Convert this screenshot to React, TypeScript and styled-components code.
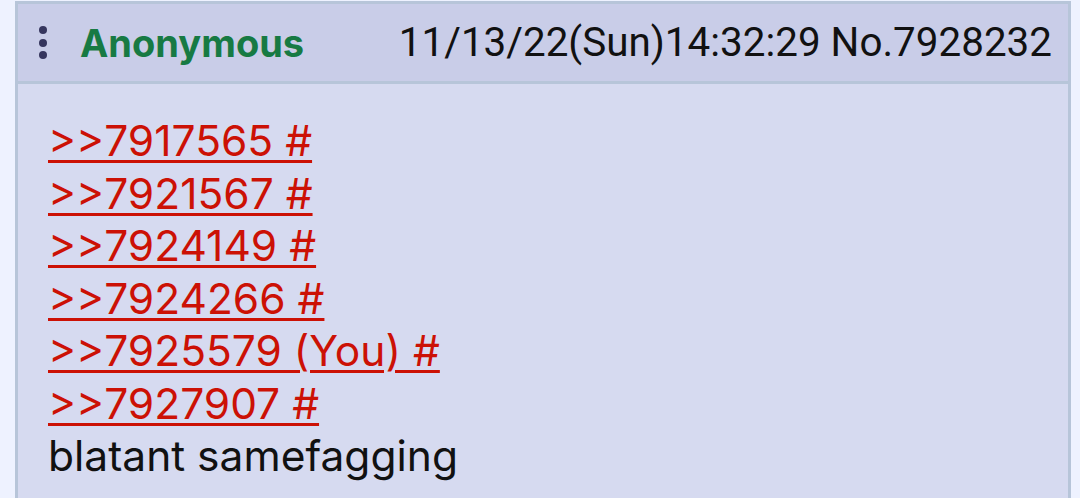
import React from "react";
import styled, { createGlobalStyle } from "styled-components";

const Global = createGlobalStyle`
  html, body {
    margin: 0;
    padding: 0;
    background: #eef2ff;
    font-family: Inter, "Noto Sans", sans-serif;
  }
`;

const Page = styled.div`
  padding: 1px 9px 0 15px;
`;

const Post = styled.article`
  border: 3px solid #b7c5d9;
  border-bottom: none;
  background: #d6daf0;
  min-height: 520px;
`;

const Header = styled.header`
  display: flex;
  align-items: center;
  height: 77px;
  background: #c9cde8;
  border-bottom: 3px solid #b7c5d9;
  padding: 0 16px 0 21px;
`;

const MenuButton = styled.div`
  display: flex;
  flex-direction: column;
  gap: 4.5px;
  width: 8px;
  margin-right: 33px;
`;

const Dot = styled.span`
  width: 8px;
  height: 8px;
  border-radius: 50%;
  background: #36365e;
`;

const Name = styled.span`
  font-weight: 700;
  font-size: 38px;
  color: #177a43;
`;

const Meta = styled.span`
  margin-left: auto;
  font-family: Roboto, sans-serif;
  font-size: 40.4px;
  color: #111;
`;

const Body = styled.div`
  padding: 31px 30px 24px;
  font-size: 42.5px;
  line-height: 52.5px;
  color: #111;
`;

const QuoteLink = styled.a`
  display: block;
  width: fit-content;
  color: #cc1105;
  text-decoration: underline;
  text-decoration-thickness: 3px;
  text-underline-offset: 4px;
`;

const quotes = [
  { id: "7917565" },
  { id: "7921567" },
  { id: "7924149" },
  { id: "7924266" },
  { id: "7925579", you: true },
  { id: "7927907" },
];

export default function App() {
  return (
    <>
      <Global />
      <Page>
        <Post>
          <Header>
            <MenuButton>
              <Dot />
              <Dot />
              <Dot />
            </MenuButton>
            <Name>Anonymous</Name>
            <Meta>11/13/22(Sun)14:32:29 No.7928232</Meta>
          </Header>
          <Body>
            {quotes.map((q) => (
              <QuoteLink key={q.id} href="#">
                {`>>${q.id}${q.you ? " (You)" : ""} #`}
              </QuoteLink>
            ))}
            <div>blatant samefagging</div>
          </Body>
        </Post>
      </Page>
    </>
  );
}
